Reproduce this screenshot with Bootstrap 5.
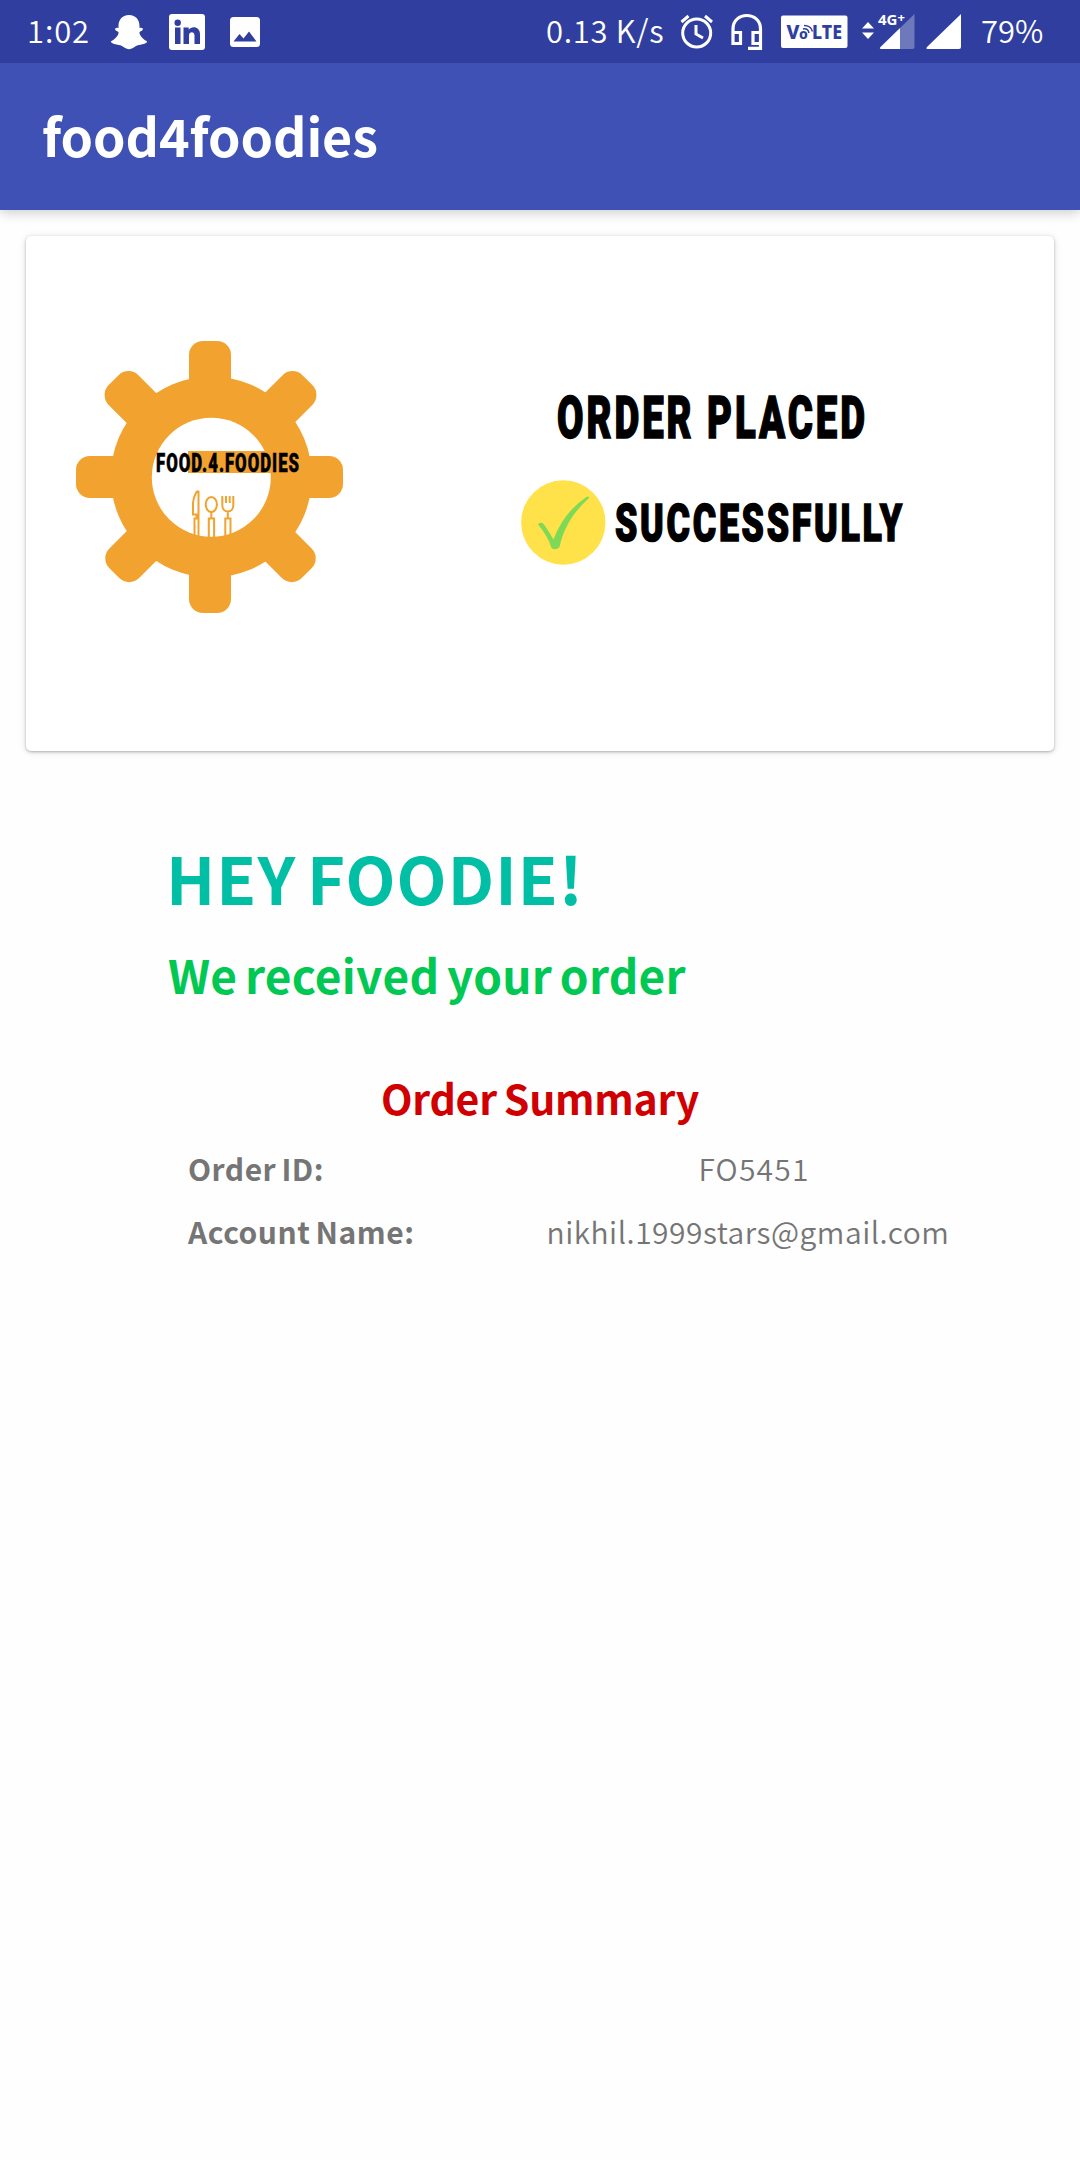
<!DOCTYPE html>
<html lang="en">
<head>
<meta charset="utf-8">
<meta name="viewport" content="width=device-width, initial-scale=1">
<title>food4foodies</title>
<link href="https://cdn.jsdelivr.net/npm/bootstrap@5.3.0/dist/css/bootstrap.min.css" rel="stylesheet">
<style>
  body { font-family: "Noto Sans CJK SC", "Noto Sans", sans-serif; background: #fefefe; min-height: 2160px; color: #757575; }
  svg { display: block; flex: none; overflow: visible; }
  .status-strip { height: 63px; background: #303f9f; color: #fff; font-size: 31px; font-weight: 350; line-height: 60px; padding-left: 27px; white-space: nowrap; position: relative; z-index: 1; }
  .status-strip span { flex: none; padding-bottom: 3px; }
  .clock-text { width: 83px; letter-spacing: .9px; }
  .rate-text { width: 134px; margin-left: 285px; letter-spacing: .7px; }
  .charge-text { margin-left: 19px; letter-spacing: 0; }
  .linkedin-icon { margin-left: 21px; }
  .photo-icon { margin-left: 24px; }
  .headset-icon { margin-left: 16px; }
  .volte-icon { margin-left: 17px; }
  .data-icon { margin-left: 13px; }
  .signal-icon { margin-left: 10px; }
  .app-header { height: 147px; background: #3f51b5; box-shadow: 0 2px 12px rgba(0,0,0,.22); padding: 0 0 3px 42px; }
  .app-title { color: #fff; font-size: 52px; font-weight: 700; line-height: 80px; letter-spacing: -.1px; }
  .order-card { margin: 26px 26px 0; height: 515px; border: 0; border-radius: 5px; box-shadow: 0 1px 3px rgba(0,0,0,.28), 0 1px 9px rgba(0,0,0,.1); background: #fff; }
  .logo-art { margin: 94px 0 0 38px; }
  .placed-art { margin: 134px 0 0 136px; }
  .greet { color: #00bfa5; font-size: 65px; line-height: 80px; font-weight: 700; margin: 86px 0 0 166px; word-spacing: -5px; letter-spacing: 1.1px; }
  .received { color: #00c853; font-size: 46px; line-height: 60px; font-weight: 700; margin: 27px 0 0 168px; word-spacing: -3px; letter-spacing: .25px; }
  .summary-title { color: #d00000; font-size: 41px; line-height: 60px; font-weight: 700; margin: 63px 0 21px; word-spacing: -2px; letter-spacing: -.25px; }
  .detail-row { font-size: 30px; line-height: 40px; padding-left: 188px; margin-bottom: 23px; }
  .detail-name { width: 309px; font-weight: 700; word-spacing: -2px; letter-spacing: .5px; }
  .detail-value { width: 502px; font-weight: 350; letter-spacing: .5px; }
  .order-code { letter-spacing: 1.2px; padding-left: 12px; }
</style>
</head>
<body>
<header>
  <div class="status-strip d-flex align-items-center">
    <span class="clock-text">1:02</span>
    <svg width="38" height="36" viewBox="110 14 38 36" fill="#fff"><path d="M129 15c7 0 10.500 5 10.500 11v2c2-.8 4 .3 3.200 1.700-.5 1-2.200 1.500-3.200 2.300-.4 3 3.500 7.500 7.500 9.200.8 1.500-3 2.800-5.500 3.300-1.500.5-3 .2-5.500 1.500-2 1-4 3.200-7 3.200s-5-2.200-7-3.200c-2.500-1.300-4-1-5.500-1.500-2.500-.5-6.300-1.800-5.500-3.300 4-1.700 8-6.200 7.500-9.200-1-.8-2.700-1.300-3.200-2.300-.8-1.400 1.200-2.500 3.200-1.700v-2c0-6 3.500-11 10.500-11z"/></svg>
    <svg class="linkedin-icon" width="36" height="36" viewBox="169 14 36 36"><rect x="169" y="14" width="36" height="36" rx="3" fill="#fff"/><g fill="#303f9f"><circle cx="177.700" cy="22.700" r="3.200"/><path d="M175 27.500h5.500V44H175zM183.500 27.500h5.200v2.300c2.500-4 11.300-4 11.300 4.500V44h-5.500v-8.500c0-4.500-5.500-4.300-5.500 0V44h-5.500z"/></g></svg>
    <svg class="photo-icon" width="32" height="32" viewBox="229 16 32 32"><rect x="230" y="17" width="30" height="30" rx="3.500" fill="#fff"/><path d="M233.500 41.500l6-7.500 4 4.500 5.500-7 7.500 10z" fill="#303f9f"/></svg>
    <span class="rate-text">0.13 K/s</span>
    <svg width="34" height="36" viewBox="680 14 34 36" fill="none" stroke="#fff" stroke-width="3"><circle cx="696.700" cy="33" r="14"/><path d="M696 25v9l7 4M681.500 22l7-6M712 22l-7-6"/></svg>
    <svg class="headset-icon" width="34" height="38" viewBox="730 13 34 38" fill="none" stroke="#fff" stroke-width="3.200"><path d="M733 43.500V29c0-18 27.500-18 27.500 0v19.300H748M733 32.500h7.500v11H733zM760.500 32.500H753v11h7.500"/></svg>
    <svg class="volte-icon" width="67" height="34" viewBox="781 16 67 34"><rect x="781" y="16.500" width="66.500" height="32.500" rx="2" fill="#fff"/><g fill="#303f9f" font-family="Noto Sans" font-weight="800" font-size="19"><text x="786.500" y="40" textLength="13" lengthAdjust="spacingAndGlyphs">V</text><text x="799" y="40" font-size="14">o</text><text x="812" y="40" textLength="30" lengthAdjust="spacingAndGlyphs">LTE</text></g><path d="M803 30q5-1 6 4M804 26.500q7 0 8.500 6" fill="none" stroke="#303f9f" stroke-width="1.500"/></svg>
    <svg class="data-icon" width="55" height="38" viewBox="861 13 55 38" fill="#fff"><path d="M862 28.500l6-6.500 6 6.500zM862 32.500h12l-6 6.500z"/><path d="M914.500 14v33q0 2-2 2H900V28z" opacity=".3"/><path d="M900 28v21h-19q-2-.2-.5-2z"/><text x="878" y="25" font-family="Noto Sans" font-weight="700" font-size="15">4G<tspan font-size="13" dy="-3">+</tspan></text></svg>
    <svg class="signal-icon" width="36" height="38" viewBox="926 13 36 38"><path d="M961 14v33q0 2-2 2h-31.500q-2-.2-.5-2z" fill="#fff"/></svg>
    <span class="charge-text">79%</span>
  </div>
  <nav class="app-header navbar"><h1 class="app-title m-0">food4foodies</h1></nav>
</header>
<main>
  <section class="card order-card d-flex flex-row align-items-start">
    <svg class="logo-art" width="300" height="300" viewBox="64 330 300 300">
      <defs><clipPath id="plate"><circle cx="211.300" cy="477.300" r="60"/></clipPath></defs>
      <g fill="#f2a22e">
        <rect x="189" y="341" width="42" height="272" rx="14"/>
        <rect x="76" y="456" width="267" height="42" rx="14"/>
        <rect x="73.500" y="456" width="273" height="42" rx="14" transform="rotate(45 210.500 477)"/>
        <rect x="74.500" y="456" width="273" height="42" rx="14" transform="rotate(-45 210.500 477)"/>
        <circle cx="211.300" cy="477" r="100.500"/>
      </g>
      <circle cx="211.300" cy="477.300" r="59.500" fill="#fff"/>
      <g clip-path="url(#plate)">
        <path d="M188 451h90v22h-90z" fill="#f2a22e"/>
        <path d="M198.500 540V491.500q-1.500-1-3 2.500-2.500 5-2.500 9v11.500h3.500V518M194.500 540v-21.500h4M211.300 512v6M208.800 540v-21.500h5.300V540M222.300 496v9c0 4 2.500 6.500 5.500 6.500s5.500-2.500 5.500-6.500v-9M226 496v7M229.700 496v7M227.800 511v7M225.300 540v-21.500h5.200V540" fill="none" stroke="#f2a22e" stroke-width="2"/>
        <ellipse cx="211.300" cy="504.500" rx="5.600" ry="7.500" fill="none" stroke="#f2a22e" stroke-width="2"/>
      </g>
      <text x="156" y="471.700" font-family="Roboto" font-weight="900" font-size="25" fill="#000" stroke="#000" stroke-width=".5" textLength="144" lengthAdjust="spacingAndGlyphs" letter-spacing="1.500">FOOD.4.FOODIES</text>
    </svg>
    <svg class="placed-art" width="430" height="210" viewBox="500 370 430 210" font-family="Roboto" font-weight="900">
      <text x="557" y="438" font-size="59" stroke="#000" stroke-width="1.500" textLength="311" lengthAdjust="spacingAndGlyphs" letter-spacing="4.500">ORDER PLACED</text>
      <circle cx="563.300" cy="522.500" r="42.200" fill="#ffe14a"/>
      <path d="M538 524.500q1.500-2.500 4.500-1.500 2.500 2 11 16.500 10-27 33-42.500 2.500-1.500 2.500 1-15 14-21 26-6 11-8.500 23-4 4-8 1-3.500-12-13.500-23.500z" fill="#7ed957"/>
      <text x="615" y="540.500" font-size="52.500" stroke="#000" stroke-width="1.500" textLength="290" lengthAdjust="spacingAndGlyphs" letter-spacing="4">SUCCESSFULLY</text>
    </svg>
  </section>
  <h2 class="greet">HEY FOODIE!</h2>
  <h3 class="received">We received your order</h3>
  <h4 class="summary-title text-center">Order Summary</h4>
  <div class="detail-row d-flex"><span class="detail-name">Order ID:</span><span class="detail-value order-code text-center">FO5451</span></div>
  <div class="detail-row d-flex"><span class="detail-name">Account Name:</span><span class="detail-value text-center">nikhil.1999stars@gmail.com</span></div>
</main>
<script src="https://cdn.jsdelivr.net/npm/bootstrap@5.3.0/dist/js/bootstrap.bundle.min.js"></script>
</body>
</html>
